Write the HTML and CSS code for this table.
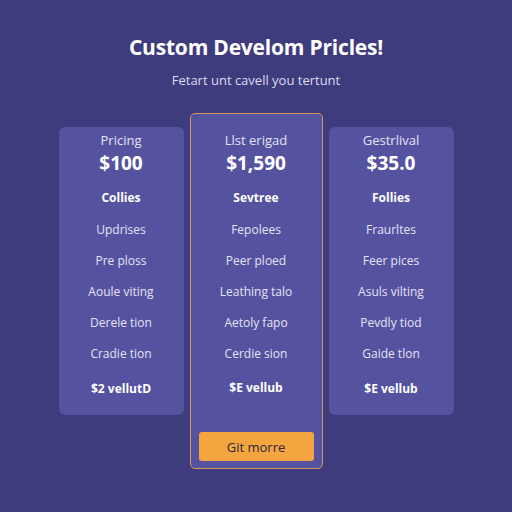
FILE: index.html
```html
<!DOCTYPE html>
<html lang="en">
<head>
  <meta charset="UTF-8" />
  <title>Custom Develom Pricles!</title>
  <link rel="stylesheet" href="styles.css">
</head>
<body>
<header class="intro">
  <h1>Custom Develom Pricles!</h1>
  <p>Fetart unt cavell you tertunt</p>
</header>
<div class="plans">
  <div class="plan">
    <div class="plan-name">Pricing</div>
    <div class="plan-price">$100</div>
    <ul>
      <li class="strong first">Collies</li>
      <li>Updrises</li>
      <li>Pre ploss</li>
      <li>Aoule viting</li>
      <li>Derele tion</li>
      <li>Cradie tion</li>
      <li class="strong last">$2 vellutD</li>
    </ul>
  </div>
  <div class="plan featured">
    <div class="plan-name">Llst erigad</div>
    <div class="plan-price">$1,590</div>
    <ul>
      <li class="strong first">Sevtree</li>
      <li>Fepolees</li>
      <li>Peer ploed</li>
      <li>Leathing talo</li>
      <li>Aetoly fapo</li>
      <li>Cerdie sion</li>
      <li class="strong last">$E vellub</li>
    </ul>
    <button class="cta">Git morre</button>
  </div>
  <div class="plan">
    <div class="plan-name">Gestrlival</div>
    <div class="plan-price">$35.0</div>
    <ul>
      <li class="strong first">Follies</li>
      <li>Fraurltes</li>
      <li>Feer pices</li>
      <li>Asuls vilting</li>
      <li>Pevdly tiod</li>
      <li>Gaide tlon</li>
      <li class="strong last">$E vellub</li>
    </ul>
  </div>
</div>
</body>
</html>
```

FILE: styles.css
```css
body {
  margin: 0;
  height: 512px;
  font-family: 'Open Sans', sans-serif;
  background: #3f3c7d;
  color: #fff;
}
.intro {
  text-align: center;
  padding-top: 33px;
}
.intro h1 {
  margin: 0;
  font-size: 21px;
  line-height: 28px;
  font-weight: 700;
  letter-spacing: -0.2px;
}
.intro p {
  margin: 11px 0 0;
  font-size: 13px;
  line-height: 16px;
  color: #dcdaf0;
}
.plans {
  display: flex;
  justify-content: center;
  align-items: flex-start;
  gap: 6px;
  margin-top: 25px;
}
.plan {
  width: 125px;
  margin-top: 14px;
  padding: 4px 0 11px;
  box-sizing: border-box;
  background: #5553a0;
  border-radius: 6px;
  text-align: center;
}
.plan.featured {
  width: 133px;
  margin-top: 0;
  padding: 17px 8px 7px;
  border: 1.5px solid #d9935f;
  border-radius: 5px;
}
.plan-name {
  font-size: 13px;
  line-height: 18px;
  color: #e4e2f4;
}
.plan-price {
  margin-top: 1px;
  font-size: 19px;
  line-height: 26px;
  font-weight: 700;
}
.plan ul {
  list-style: none;
  margin: 6px 0 0;
  padding: 0;
}
.plan li {
  height: 31px;
  line-height: 31px;
  font-size: 12px;
  color: #e4e2f4;
}
.plan li.strong {
  font-weight: 700;
  color: #fff;
}
.plan li.first {
  height: 32px;
}
.plan li.last {
  margin-top: 4px;
}
.featured li.last {
  margin-top: 3px;
}
.cta {
  display: block;
  width: 100%;
  height: 29px;
  margin-top: 29px;
  background: #f5a53f;
  border: none;
  border-radius: 3px;
  font-family: 'Open Sans', sans-serif;
  font-size: 13px;
  color: #2c2540;
}
```
